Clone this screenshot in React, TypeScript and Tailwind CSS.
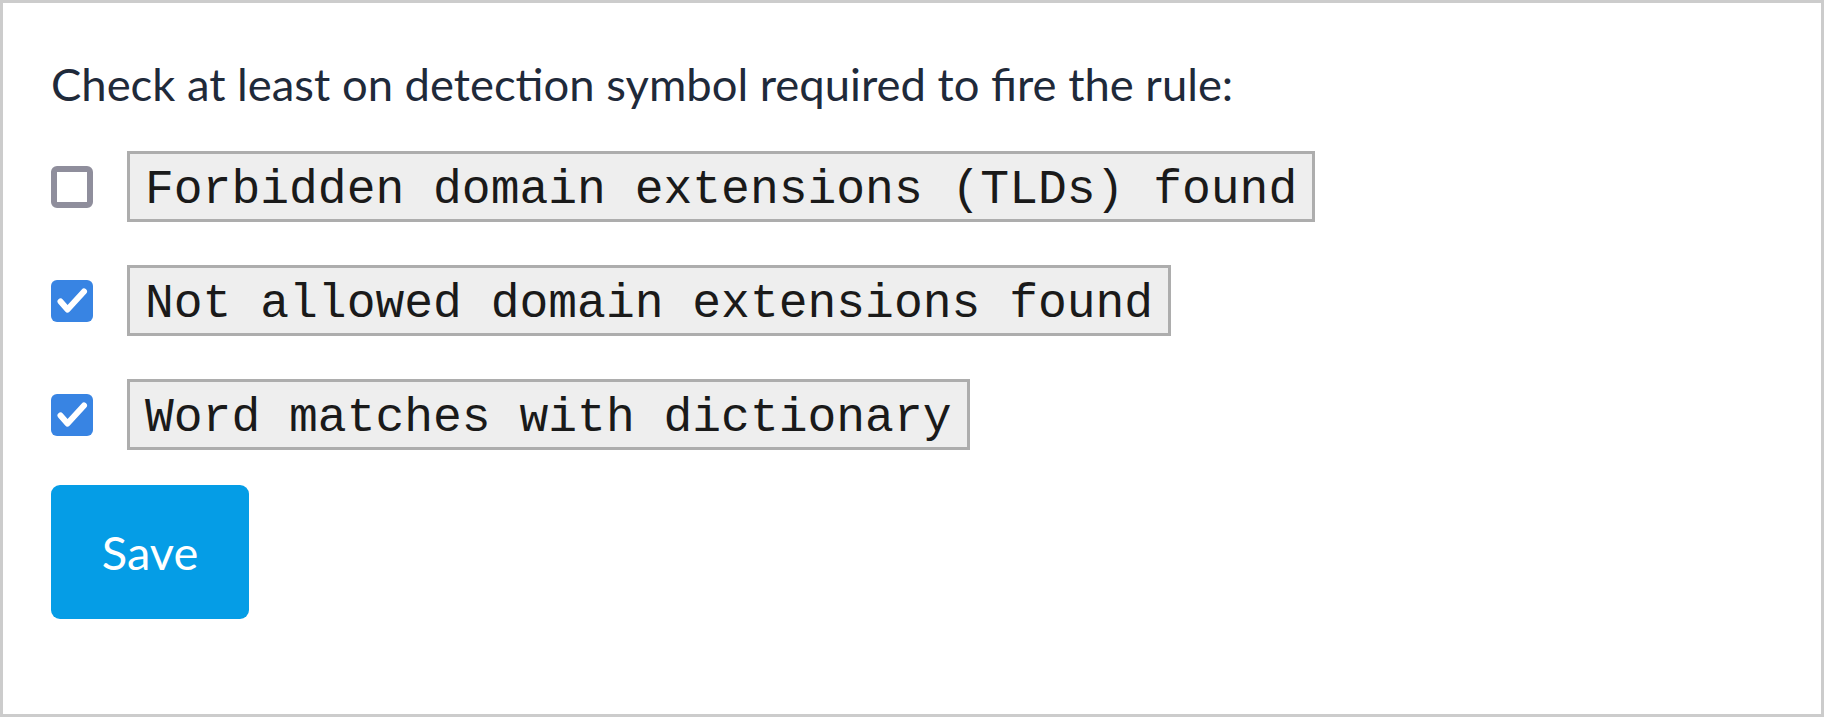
import { useState } from "react";

const symbols = [
  { id: "tld", label: "Forbidden domain extensions (TLDs) found", checked: false },
  { id: "notAllowed", label: "Not allowed domain extensions found", checked: true },
  { id: "dictionary", label: "Word matches with dictionary", checked: true },
];

function Checkbox({ checked, onChange }: { checked: boolean; onChange: () => void }) {
  return (
    <button
      type="button"
      role="checkbox"
      aria-checked={checked}
      onClick={onChange}
      className={
        checked
          ? "flex h-[42px] w-[42px] shrink-0 items-center justify-center rounded-[6px] bg-[#3884e3]"
          : "h-[42px] w-[42px] shrink-0 rounded-[6px] border-[6px] border-[#8f8e9c] bg-white"
      }
    >
      {checked && (
        <svg viewBox="0 0 42 42" className="h-[42px] w-[42px]">
          <path
            d="M9.5 21.5 L16.5 29.5 L33 11.5"
            fill="none"
            stroke="white"
            strokeWidth="6"
            strokeLinecap="round"
            strokeLinejoin="round"
          />
        </svg>
      )}
    </button>
  );
}

export default function App() {
  const [checked, setChecked] = useState(symbols.map((s) => s.checked));

  return (
    <div className="h-[717px] w-[1824px] border-[3px] border-[#cccccc] bg-white px-[48px] pt-[55px] font-['Lato','Noto_Sans',sans-serif]">
      <p className="text-[45.4px] leading-[52px] text-[#1f2a3a]">
        Check at least on detection symbol required to fire the rule:
      </p>
      <div className="mt-[41px] flex flex-col gap-[43px]">
        {symbols.map((s, i) => (
          <label key={s.id} className="flex items-center gap-[34px]">
            <Checkbox
              checked={checked[i]}
              onChange={() => setChecked((prev) => prev.map((v, j) => (j === i ? !v : v)))}
            />
            <code className="border-[3px] border-[#adadad] bg-[#eeeeee] px-[15px] pt-[9px] pb-[1px] font-['Liberation_Mono',monospace] text-[48px] leading-[55px] text-[#1a1a1a]">
              {s.label}
            </code>
          </label>
        ))}
      </div>
      <button
        type="button"
        className="mt-[35px] h-[134px] w-[198px] rounded-[9px] bg-[#059de6] text-[47px] text-white"
      >
        Save
      </button>
    </div>
  );
}
